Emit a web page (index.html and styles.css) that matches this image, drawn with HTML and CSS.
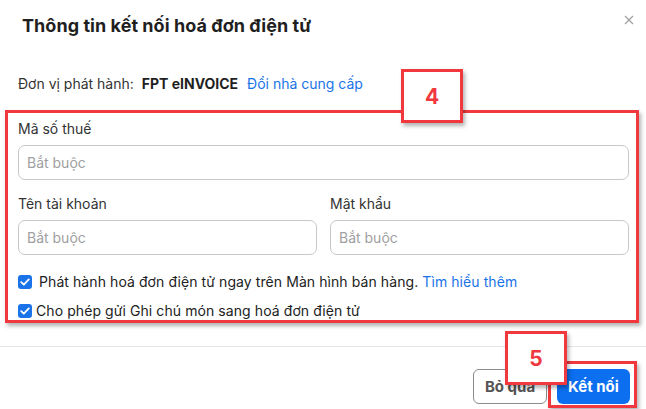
FILE: index.html
```html
<!DOCTYPE html>
<html lang="vi">
<head>
    <meta charset="UTF-8">
    <meta name="viewport" content="width=device-width, initial-scale=1.0">
    <title>Thông tin kết nối hoá đơn điện tử</title>
    <link rel="stylesheet" href="styles.css">
</head>
<body>
    <div class="modal">
        <div class="modal-header">
            <h2 class="modal-title">Thông tin kết nối hoá đơn điện tử</h2>
            <button class="close-btn" aria-label="Đóng">
                <svg width="10" height="10" viewBox="0 0 10 10"><path d="M1 1L9 9M9 1L1 9" stroke="#a3a3a3" stroke-width="1.4"/></svg>
            </button>
        </div>

        <div class="modal-body">
            <div class="provider">
                <span class="provider-label">Đơn vị phát hành:</span>
                <span class="provider-name">FPT eINVOICE</span>
                <a href="#" class="link">Đổi nhà cung cấp</a>
            </div>

            <div class="form">
                <div class="field">
                    <label class="field-label">Mã số thuế</label>
                    <input class="field-input" type="text" placeholder="Bắt buộc">
                </div>
                <div class="field-row">
                    <div class="field">
                        <label class="field-label">Tên tài khoản</label>
                        <input class="field-input" type="text" placeholder="Bắt buộc">
                    </div>
                    <div class="field">
                        <label class="field-label">Mật khẩu</label>
                        <input class="field-input" type="password" placeholder="Bắt buộc">
                    </div>
                </div>

                <div class="checks">
                    <label class="check">
                        <span class="check-box"><svg width="10" height="8" viewBox="0 0 10 8"><path d="M1.2 4.1L3.8 6.6L8.8 1.4" fill="none" stroke="#fff" stroke-width="1.8" stroke-linecap="round" stroke-linejoin="round"/></svg></span>
                        <span class="check-text wide">Phát hành hoá đơn điện tử ngay trên Màn hình bán hàng. <a href="#" class="link">Tìm hiểu thêm</a></span>
                    </label>
                    <label class="check">
                        <span class="check-box"><svg width="10" height="8" viewBox="0 0 10 8"><path d="M1.2 4.1L3.8 6.6L8.8 1.4" fill="none" stroke="#fff" stroke-width="1.8" stroke-linecap="round" stroke-linejoin="round"/></svg></span>
                        <span class="check-text">Cho phép gửi Ghi chú món sang hoá đơn điện tử</span>
                    </label>
                </div>
            </div>
        </div>

        <div class="modal-footer">
            <button class="btn btn-cancel">Bỏ qua</button>
            <button class="btn btn-primary">Kết nối</button>
        </div>

        <!-- Chú thích hướng dẫn -->
        <div class="mark mark-form"></div>
        <div class="mark mark-btn"></div>
        <div class="badge badge-4">4</div>
        <div class="badge badge-5">5</div>
    </div>
</body>
</html>
```

FILE: styles.css
```css
/* Estilos generales */
* {
    margin: 0;
    padding: 0;
    box-sizing: border-box;
}

body {
    font-family: 'Inter', 'Roboto', sans-serif;
    background-color: #fff;
    color: #222;
    width: 646px;
    height: 409px;
    overflow: hidden;
}

.modal {
    position: relative;
    height: 409px;
}

/* Cabecera */
.modal-header {
    display: flex;
    justify-content: space-between;
    align-items: flex-start;
    padding: 14px 12px 0 22px;
}

.modal-title {
    font-size: 18px;
    line-height: 24px;
    font-weight: 700;
    color: #1f1f1f;
    letter-spacing: 0.05px;
}

.close-btn {
    background: none;
    border: none;
    width: 10px;
    height: 10px;
    margin-top: 1px;
    display: flex;
}

/* Cuerpo */
.modal-body {
    padding: 0 17px 0 18px;
}

.provider {
    margin-top: 36px;
    font-size: 14px;
    line-height: 20px;
    color: #333;
}

.provider-name {
    font-weight: 700;
    color: #1f1f1f;
    margin: 0 5px 0 4px;
}

.link {
    color: #1a73e8;
    text-decoration: none;
}

.form {
    margin-top: 25px;
}

.field {
    display: flex;
    flex-direction: column;
    flex: 1;
}

.field-label {
    font-size: 14px;
    line-height: 20px;
    color: #333;
    margin-bottom: 6px;
}

.field-input {
    height: 35px;
    border: 1px solid #c8c8c8;
    border-radius: 7px;
    padding: 0 8px;
    font-family: inherit;
    font-size: 14px;
    color: #333;
    outline: none;
}

.field-input::placeholder {
    color: #a0a0a0;
}

.field-row {
    display: flex;
    gap: 13px;
    margin-top: 14px;
}

.checks {
    margin-top: 17px;
    display: flex;
    flex-direction: column;
    gap: 9px;
}

.check {
    display: flex;
    align-items: center;
    font-size: 14px;
    line-height: 20px;
    color: #222;
    letter-spacing: 0.08px;
}

.check-box {
    width: 14px;
    height: 14px;
    border-radius: 3px;
    background-color: #1a73e8;
    display: flex;
    align-items: center;
    justify-content: center;
    margin-right: 4px;
}

.check-text.wide {
    margin-left: 3px;
}

/* Pie */
.modal-footer {
    margin-top: 25px;
    border-top: 1px solid #e6e6e6;
    display: flex;
    justify-content: flex-end;
    gap: 10px;
    padding: 22px 16px 0 0;
}

.btn {
    height: 35px;
    border-radius: 6px;
    font-family: inherit;
    font-size: 15px;
    font-weight: 700;
    padding: 0;
    white-space: nowrap;
}

.btn-cancel {
    background: #fff;
    border: 1px solid #8c8c8c;
    color: #555;
    width: 74px;
}

.btn-primary {
    background-color: #0b6ff0;
    border: none;
    color: #fff;
    width: 73px;
}

/* Marcas rojas */
.mark {
    position: absolute;
    border: 3px solid #f0383e;
    box-shadow: 2px 3px 4px rgba(0, 0, 0, 0.3);
}

.mark-form {
    left: 5px;
    top: 110px;
    width: 634px;
    height: 213px;
}

.mark-btn {
    left: 548px;
    top: 361px;
    width: 89px;
    height: 47px;
}

.badge {
    position: absolute;
    width: 62px;
    height: 54px;
    background: #fff;
    border: 3px solid #f0383e;
    box-shadow: 2px 3px 4px rgba(0, 0, 0, 0.3);
    color: #f0383e;
    font-size: 21px;
    font-weight: 700;
    display: flex;
    align-items: center;
    justify-content: center;
}

.badge-4 {
    left: 401px;
    top: 69px;
}

.badge-5 {
    left: 505px;
    top: 331px;
}
```
